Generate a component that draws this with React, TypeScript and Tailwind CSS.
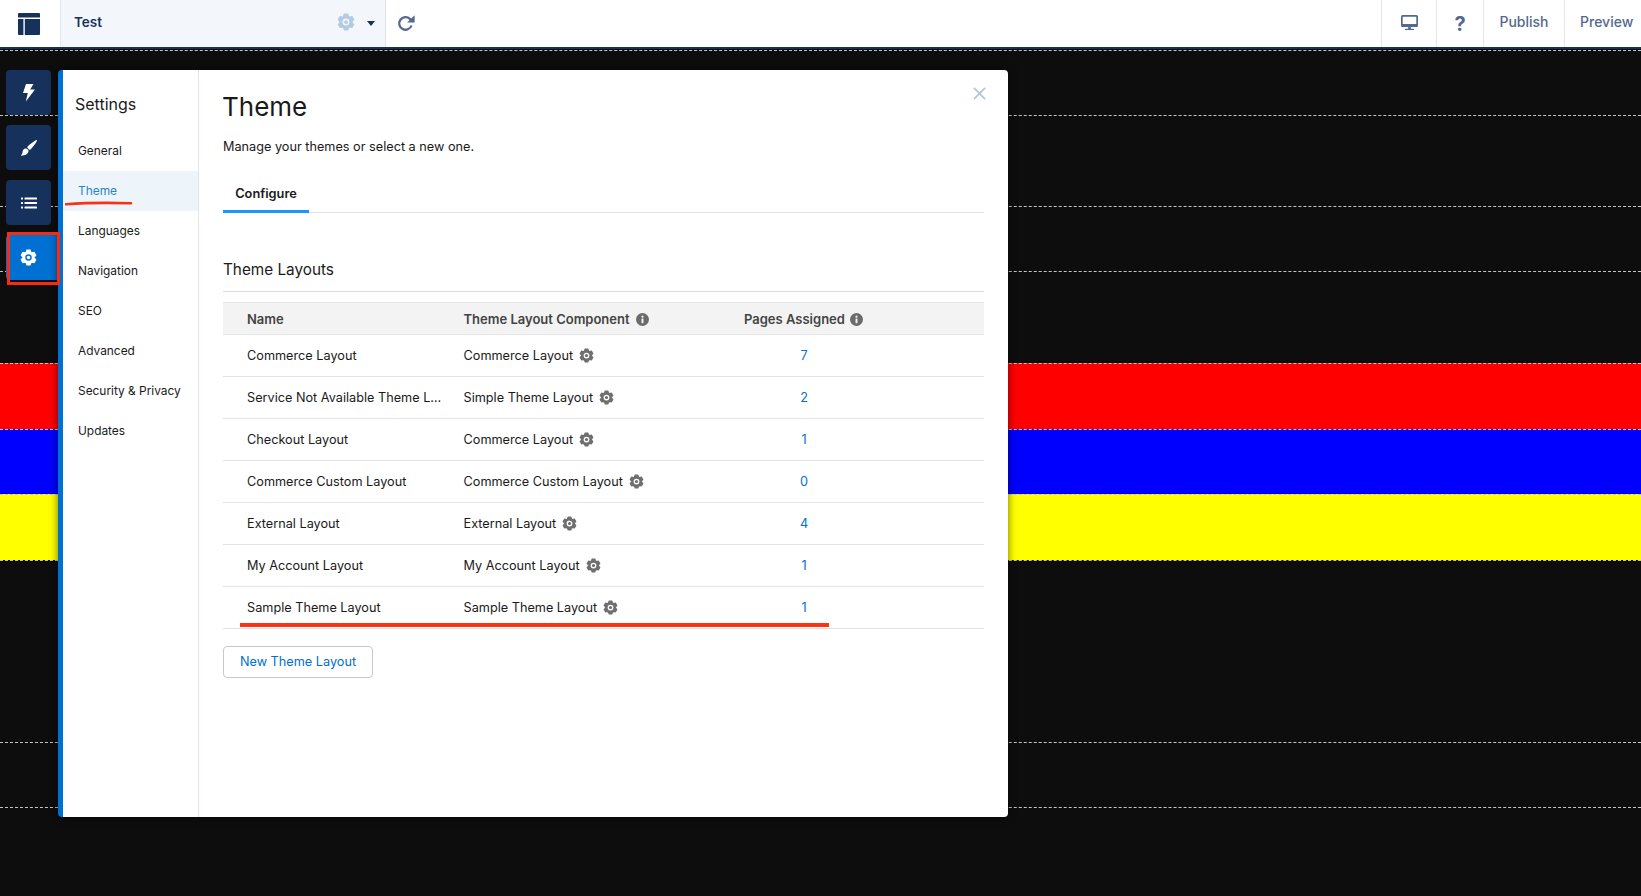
import React from "react";

const gearPath = (() => {
  const pts: string[] = [];
  const teeth = 6;
  for (let i = 0; i < teeth; i++) {
    const a = (i * Math.PI * 2) / teeth - Math.PI / 2;
    const w = 0.3;
    const gap = 0.27;
    const p = [
      [a - w - gap + 0.02, 8.4],
      [a - w + 0.06, 11.6],
      [a + w - 0.06, 11.6],
      [a + w + gap - 0.02, 8.4],
    ];
    p.forEach(([t, r]) => pts.push(`${(12 + r * Math.cos(t)).toFixed(2)} ${(12 + r * Math.sin(t)).toFixed(2)}`));
  }
  return `M${pts.join("L")}Z M12 7.400a4.600 4.600 0 1 0 0 9.200a4.600 4.600 0 1 0 0-9.200Z`;
})();

function Gear({ className }: { className: string }) {
  return (
    <svg viewBox="0 0 24 24" className={className} fill="currentColor" fillRule="evenodd">
      <path d={gearPath} />
      <circle cx="12" cy="12" r="2.500" />
    </svg>
  );
}

function Info() {
  return (
    <span className="ml-[6px] flex h-[13px] w-[13px] items-center justify-center rounded-full bg-[#6b6b6b]">
      <svg viewBox="0 0 12 12" className="h-[13px] w-[13px]" fill="#f3f3f3">
        <circle cx="6" cy="3.400" r="1" />
        <rect x="5.100" y="5" width="1.800" height="4.400" rx="0.400" />
      </svg>
    </span>
  );
}

const rows = [
  ["Commerce Layout", "Commerce Layout", "7"],
  ["Service Not Available Theme Layout", "Simple Theme Layout", "2"],
  ["Checkout Layout", "Commerce Layout", "1"],
  ["Commerce Custom Layout", "Commerce Custom Layout", "0"],
  ["External Layout", "External Layout", "4"],
  ["My Account Layout", "My Account Layout", "1"],
  ["Sample Theme Layout", "Sample Theme Layout", "1"],
];

const navItems = ["General", "Theme", "Languages", "Navigation", "SEO", "Advanced", "Security & Privacy", "Updates"];

const dash = "border-t border-dashed border-[#c4c4c4]";

function RailButton({ children }: { children: React.ReactNode }) {
  return <div className="flex h-[45px] w-[45px] items-center justify-center rounded-[4px] bg-[#16325c]">{children}</div>;
}

export default function App() {
  return (
    <div className="relative flex h-[896px] w-[1641px] flex-col overflow-hidden bg-[#0d0d0d] font-['Inter',sans-serif]">
      <header className="flex h-[49px] shrink-0 border-b-2 border-[#16325c] bg-white">
        <div className="flex w-[61px] items-center justify-center border-r border-[#e3e6ea] pr-[3px]">
          <svg viewBox="0 0 22 22" className="h-[22px] w-[22px]" fill="#16325c">
            <path d="M1 0h20a1 1 0 0 1 1 1v3.600H0V1a1 1 0 0 1 1-1Z" />
            <path d="M0 6h5.400v16H1a1 1 0 0 1-1-1Z" />
            <path d="M6.800 6H22v15a1 1 0 0 1-1 1H6.800Z" />
          </svg>
        </div>
        <div className="flex w-[325px] items-center border-r border-[#dfe3e8] bg-[#f3f6fa] pl-[13px]">
          <span className="pb-[3px] text-[13.500px] font-semibold text-[#16325c]">Test</span>
          <Gear className="mb-[3px] ml-auto h-[18px] w-[18px] text-[#b2cbe2]" />
          <svg viewBox="0 0 8 5" className="mb-[1px] ml-[12px] mr-[10px] h-[5px] w-[8px]" fill="#16325c">
            <path d="M0 0h8L4 5Z" />
          </svg>
        </div>
        <div className="flex w-[40px] items-center justify-center">
          <svg viewBox="0 0 20 20" className="-mt-[2px] h-[20px] w-[20px]" fill="none">
            <path d="M15.500 12.500a6.300 6.300 0 1 1-1.600-6.600l1.800 1.900" stroke="#54698d" strokeWidth="2.300" />
            <path d="M18.600 2.200v7.400h-7.400Z" fill="#54698d" />
          </svg>
        </div>
        <div className="ml-auto flex text-[14px] font-medium text-[#54698d]">
          <div className="flex w-[55px] items-center justify-center border-l border-[#e3e6ea] pb-[2px]">
            <svg viewBox="0 0 17 16" className="h-[16px] w-[17px]" fill="#54698d">
              <path d="M1.500 0h14A1.500 1.500 0 0 1 17 1.500v9a1.500 1.500 0 0 1-1.500 1.500h-14A1.500 1.500 0 0 1 0 10.500v-9A1.500 1.500 0 0 1 1.500 0ZM1.700 1.700v7.300h13.600V1.700Z" fillRule="evenodd" />
              <path d="M7.200 12h2.600v1.800h2.400a.8.8 0 0 1 .8.800v.4H4v-.4a.8.8 0 0 1 .8-.8h2.400Z" />
            </svg>
          </div>
          <div className="flex w-[47px] items-center justify-center border-l border-[#e3e6ea] text-[20px] font-bold">?</div>
          <div className="flex w-[81px] items-center justify-center border-l border-[#e3e6ea] pb-[5px]">Publish</div>
          <div className="flex w-[77px] items-center border-l border-[#e3e6ea] pb-[5px] pl-[15px]">Preview</div>
        </div>
      </header>

      <main className="flex flex-1 flex-col">
        <div className="h-px shrink-0" />
        <div className={`h-[65px] shrink-0 ${dash}`} />
        <div className={`h-[91px] shrink-0 ${dash}`} />
        <div className={`h-[65px] shrink-0 ${dash}`} />
        <div className={`h-[92px] shrink-0 ${dash}`} />
        <div className={`h-[66px] shrink-0 bg-[#ff0000] ${dash}`} />
        <div className={`h-[65px] shrink-0 bg-[#0000ff] ${dash}`} />
        <div className={`h-[66px] shrink-0 bg-[#ffff00] ${dash}`} />
        <div className={`h-[182px] shrink-0 ${dash}`} />
        <div className={`h-[65px] shrink-0 ${dash}`} />
        <div className={`flex-1 ${dash}`} />
      </main>

      {/* tool rail */}
      <div className="absolute left-[6px] top-[70px] flex flex-col gap-[10px]">
        <RailButton>
          <svg viewBox="0 0 14 18" className="h-[18px] w-[14px]" fill="#fff">
            <path d="M4 0h7.500L8.200 5.600H13L3.800 17.500 5.800 9H1Z" />
          </svg>
        </RailButton>
        <RailButton>
          <svg viewBox="0 0 16 16" className="h-[16px] w-[16px]" fill="#fff">
            <path d="M15.700.3c.3.300.3.700.1 1-1.800 3-3.800 5.800-6.300 8.200-.4.400-1 .4-1.400 0L6.600 8c-.4-.4-.4-1 0-1.400C9 4.100 11.800 2.100 14.800.2c.3-.2.700-.2.900.1Z" />
            <path d="M4.800 8.600c1.500-.1 2.800 1.200 2.700 2.700-.2 2.800-3.400 4.400-7.200 4.400-.4 0-.5-.4-.2-.6 1.100-.8 1.200-1.600 1.400-3 .2-1.800 1.500-3.400 3.300-3.500Z" />
          </svg>
        </RailButton>
        <RailButton>
          <svg viewBox="0 0 16 12" className="h-[12px] w-[16px]" fill="#fff">
            <rect x="0" y="0.500" width="2" height="2" rx="0.500" />
            <rect x="0" y="5" width="2" height="2" rx="0.500" />
            <rect x="0" y="9.500" width="2" height="2" rx="0.500" />
            <rect x="3.500" y="0.500" width="12.500" height="2" rx="0.500" />
            <rect x="3.500" y="5" width="12.500" height="2" rx="0.500" />
            <rect x="3.500" y="9.500" width="12.500" height="2" rx="0.500" />
          </svg>
        </RailButton>
        <div className="flex h-[45px] w-[52px] items-center justify-center rounded-l-[4px] bg-[#0070d2] pr-[7px]">
          <Gear className="h-[17px] w-[17px] text-white" />
        </div>
      </div>

      {/* settings panel */}
      <div className="absolute left-[58px] top-[70px] flex h-[747px] w-[950px] overflow-hidden rounded-[4px] border-l-[5px] border-[#0070d2] bg-white shadow-[0_0_9px_rgba(0,0,0,0.55)]">
        <aside className="w-[136px] shrink-0 border-r border-[#dfe5ec] pt-[22px]">
          <h2 className="pl-[12px] text-[16px] leading-[24px] text-[#1a1a1a]">Settings</h2>
          <ul className="mt-[15px]">
            {navItems.map((n) =>
              n === "Theme" ? (
                <li key={n} className="flex h-[40px] items-center bg-[#eef5fa] pl-[15px] text-[11.900px] text-[#2a84c5]">{n}</li>
              ) : (
                <li key={n} className="flex h-[40px] items-center pl-[15px] text-[11.900px] text-[#1a1a1a]">{n}</li>
              )
            )}
          </ul>
        </aside>
        <section className="relative flex-1 px-[24px] pt-[19px]">
          <svg viewBox="0 0 14 14" className="absolute right-[22px] top-[17px] h-[13px] w-[13px]" fill="none" stroke="#b2c6da" strokeWidth="1.800">
            <path d="M1 1l12 12M13 1 1 13" />
          </svg>
          <h1 className="-ml-[1px] text-[26px] leading-[36px] text-[#1a1a1a]">Theme</h1>
          <p className="mt-[12px] text-[12.700px] leading-[20px] text-[#1a1a1a]">Manage your themes or select a new one.</p>
          <div className="mt-[16px] flex h-[40px] border-b border-[#dfe3e8]">
            <div className="flex h-[40px] w-[86px] items-center justify-center border-b-[3px] border-[#1b96ff] pt-[5px] text-[12.800px] font-semibold text-[#1a1a1a]">Configure</div>
          </div>
          <h3 className="mt-[44px] border-b border-[#d8dbe2] pb-[10px] pt-[1px] text-[15.300px] leading-[23px] text-[#1a1a1a]">Theme Layouts</h3>
          <div className="mt-[10px] flex h-[33px] items-center border-y border-[#e6e6e6] bg-[#f3f3f3] pt-[2px] text-[13px] font-semibold text-[#444444]">
            <div className="w-[240.500px] pl-[24px]">Name</div>
            <div className="flex w-[280.500px] items-center">Theme Layout Component<Info /></div>
            <div className="flex items-center">Pages Assigned<span className="-ml-[1px] flex"><Info /></span></div>
          </div>
          {rows.map(([a, b, c], i) => (
            <div key={i} className="flex h-[42px] items-center border-b border-[#e3e3e3] text-[12.700px] text-[#1a1a1a]">
              <div className="w-[240.500px] pl-[24px] pr-[20px]"><div className="truncate">{a}</div></div>
              <div className="flex w-[280.500px] items-center">{b}<Gear className="ml-[6px] h-[15px] w-[15px] text-[#6f6f6f]" /></div>
              <div className="w-[120px] text-center text-[#0070d2]">{c}</div>
            </div>
          ))}
          <button className="mt-[17px] h-[32px] w-[150px] rounded-[4px] border border-[#c9c9c9] bg-white text-[12.700px] text-[#0070d2]">New Theme Layout</button>
        </section>
      </div>

      {/* hand-drawn annotations */}
      <svg viewBox="0 0 70 6" className="absolute left-[65px] top-[200px] h-[6px] w-[70px]" fill="none">
        <path d="M1 4.200C20 2.800 40 2.500 66 3.200" stroke="#f5311a" strokeWidth="2.600" strokeLinecap="round" />
      </svg>
      <div className="absolute left-[240px] top-[623px] h-[4px] w-[589px] bg-[#fa3414]" />
      <div className="absolute left-[7px] top-[232px] h-[53px] w-[53px] border-[3px] border-[#f52b14]" />
    </div>
  );
}
